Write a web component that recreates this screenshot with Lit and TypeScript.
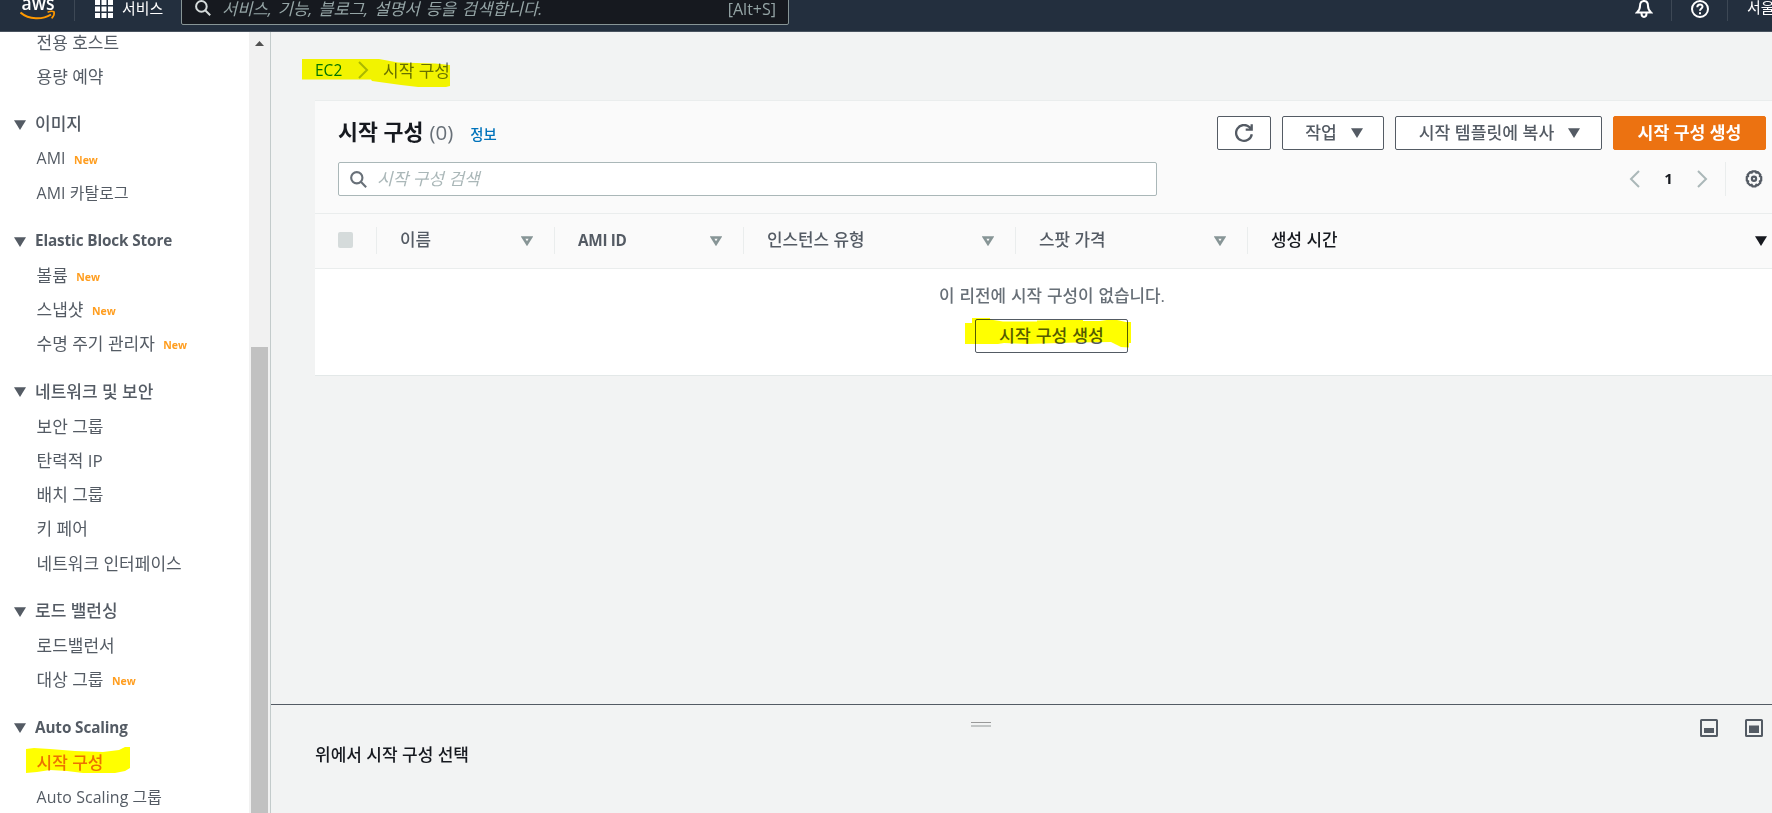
import { LitElement, html, css, svg, nothing } from "lit";
import { customElement, property } from "lit/decorators.js";

type NavItem = { label: string; isNew?: boolean; active?: boolean };
type NavGroup = { title?: string; latin?: boolean; items: NavItem[] };
type Column = { label: string; width: number; sorted?: boolean; latin?: boolean };

const NAV: NavGroup[] = [
  { items: [{ label: "전용 호스트" }, { label: "용량 예약" }] },
  { title: "이미지", items: [{ label: "AMI", isNew: true }, { label: "AMI 카탈로그" }] },
  {
    title: "Elastic Block Store",
    latin: true,
    items: [
      { label: "볼륨", isNew: true },
      { label: "스냅샷", isNew: true },
      { label: "수명 주기 관리자", isNew: true },
    ],
  },
  {
    title: "네트워크 및 보안",
    items: [
      { label: "보안 그룹" },
      { label: "탄력적 IP" },
      { label: "배치 그룹" },
      { label: "키 페어" },
      { label: "네트워크 인터페이스" },
    ],
  },
  { title: "로드 밸런싱", items: [{ label: "로드밸런서" }, { label: "대상 그룹", isNew: true }] },
  { title: "Auto Scaling", latin: true, items: [{ label: "시작 구성", active: true }, { label: "Auto Scaling 그룹" }] },
];

const COLUMNS: Column[] = [
  { label: "이름", width: 178 },
  { label: "AMI ID", width: 189, latin: true },
  { label: "인스턴스 유형", width: 272 },
  { label: "스팟 가격", width: 232 },
  { label: "생성 시간", width: 525, sorted: true },
];

const magnifier = (size: number) => html`<svg width=${size} height=${size} viewBox="0 0 16 16" fill="none" stroke="currentColor" stroke-width="2">
  <circle cx="6.4" cy="6.4" r="5.3" /><path d="M10.2 10.2 15.2 15.2" />
</svg>`;

const caret = html`<svg width="12" height="10" viewBox="0 0 12 10"><path d="M0 .2h12L6 10Z" fill="currentColor" /></svg>`;
const hollowCaret = html`<svg width="12" height="10" viewBox="0 0 12 10"><path d="M2 1.500h8L6 7.800Z" fill="none" stroke="currentColor" stroke-width="2.600" /></svg>`;

const chevron = (d: string) => html`<svg width="11" height="18" viewBox="0 0 11 18" fill="none" stroke="currentColor" stroke-width="2"><path d=${d} /></svg>`;
const LEFT = "M10 1 2 9l8 8";
const RIGHT = "M1 1l8 8-8 8";

const base = css`
  :host { display: block; }
  * { box-sizing: border-box; }
  svg { display: block; flex: none; }
`;

@customElement("top-bar")
export class TopBar extends LitElement {
  static styles = [base, css`
    :host { flex: none; }
    .bar { height: 48px; margin-top: -16px; background: #232f3e; border-bottom: 1px solid #49535f; display: flex; align-items: center; color: #fff; }
    .brand { width: 75px; padding-left: 20px; border-right: 1px solid #3d4855; height: 26px; }
    .services { display: flex; align-items: center; gap: 9px; padding-left: 20px; width: 106px; white-space: nowrap; font-size: 14.900px; }
    .services svg { margin-top: 3px; }
    .services span { padding-bottom: 1px; }
    .search { width: 608px; height: 34px; border: 1px solid #879596; border-radius: 2px; background: #16191f; display: flex; align-items: center; padding: 0 12px 0 13px; color: #d5dbdb; }
    .hint { flex: 1; margin-left: 11px; font-style: italic; font-size: 16.600px; color: #95a5a6; white-space: nowrap; word-spacing: 1.500px; }
    .key { font-size: 16px; color: #95a5a6; padding-top: 3px; }
    .tools { margin-left: auto; display: flex; align-items: center; height: 26px; }
    .tool { height: 26px; display: flex; align-items: center; justify-content: center; width: 56px; border-right: 1px solid #3d4855; }
    .tool svg { margin-top: 3px; }
    .region { width: 44px; padding: 0 0 2px 19px; overflow: hidden; white-space: nowrap; font-size: 15px; }
  `];
  render() {
    return html`<header class="bar">
      <div class="brand">
        <svg width="36" height="26" viewBox="0 0 36 26">
          <text x="18" y="14.500" text-anchor="middle" textLength="33" lengthAdjust="spacingAndGlyphs" font-family="Open Sans, sans-serif" font-weight="600" font-size="19" fill="#fff">aws</text>
          <path d="M.5 17.500C9 24.800 22.500 24.800 31 19.500" fill="none" stroke="#ff9900" stroke-width="2" />
          <path d="M27.600 17.300c2.500-1.100 5-1.300 6.500-.4.4 2-.5 4.600-2.500 6.500" fill="none" stroke="#ff9900" stroke-width="1.600" />
        </svg>
      </div>
      <div class="services">
        <svg width="18" height="18" viewBox="0 0 18 18" fill="#fff">
          ${[0, 6.5, 13].map((y) => [0, 6.5, 13].map((x) => svg`<rect x=${x} y=${y} width="5" height="5" />`))}
        </svg>
        <span>서비스</span>
      </div>
      <div class="search">${magnifier(16)}<span class="hint">서비스, 기능, 블로그, 설명서 등을 검색합니다.</span><span class="key">[Alt+S]</span></div>
      <div class="tools">
        <div class="tool">
          <svg width="18" height="20" viewBox="0 0 18 20" fill="none" stroke="#fff" stroke-width="2">
            <path d="M9 2C5.800 2 5 4.500 5 7c0 3.200-1.200 4.800-3 6.500h14C14.200 11.800 13 10.200 13 7c0-2.500-.8-5-4-5ZM9 0v2M6.500 14.500c0 4.500 5 4.500 5 0" />
          </svg>
        </div>
        <div class="tool">
          <svg width="18" height="20" viewBox="0 0 18 20" fill="none" stroke="#fff" stroke-width="2">
            <circle cx="9" cy="10" r="8" /><path d="M6.300 8.200c.1-3.700 5.400-3.400 5.200-.4-.1 1.700-2.400 1.700-2.500 3.900M9 13.200v2" />
          </svg>
        </div>
        <div class="region">서울</div>
      </div>
    </header>`;
  }
}

@customElement("side-nav")
export class SideNav extends LitElement {
  static styles = [base, css`
    :host { flex: none; width: 271px; height: 100%; }
    .wrap { display: flex; height: 100%; border-right: 1px solid #c3cbcb; background: #fff; overflow: hidden; }
    nav { flex: 1; min-width: 0; color: #545b64; font-size: 17px; }
    .group:first-child { margin-top: -8px; }
    .title { margin-top: 13.500px; height: 35px; display: flex; align-items: center; gap: 9px; padding-left: 14px; font-weight: 500; font-size: 17px; white-space: nowrap; }
    .title.latin { font-weight: 700; font-size: 15.300px; letter-spacing: -.12px; }
    .title svg { margin-top: 3px; }
    .title span { padding-bottom: 1px; }
    .title.latin span { padding: 0; }
    .item { height: 34.150px; padding-left: 36.500px; display: flex; align-items: center; gap: 9px; white-space: nowrap; position: relative; }
    .latin-label { font-size: 15.900px; letter-spacing: .1px; padding-top: 1px; }
    .new { margin-left: -.5px; color: #ff9d1e; font-size: 10.500px; font-weight: 700; padding-top: 5px; }
    .active .label { color: #ec7211; font-weight: 500; }
    .mark { position: absolute; left: 26px; top: 3px; mix-blend-mode: multiply; }
    .track { width: 21px; background: #f1f1f1; display: flex; flex-direction: column; align-items: center; padding: 9px 1px 0 0; }
    .thumb { width: 17px; flex: 1; background: #c1c1c1; margin-top: 301px; }
  `];
  render() {
    return html`<div class="wrap">
      <nav>
        ${NAV.map((g) => html`<div class="group">
          ${g.title ? html`<div class="title ${g.latin ? "latin" : ""}">${caret}<span>${g.title}</span></div>` : nothing}
          ${g.items.map((i) => html`<div class="item ${i.active ? "active" : ""}">
            <span class="label ${/^A/.test(i.label) ? "latin-label" : ""}">${i.label}</span>
            ${i.isNew ? html`<span class="new">New</span>` : nothing}
            ${i.active ? html`<svg class="mark" width="104" height="27" viewBox="26 748 104 27"><path fill="#ff0" d="M26 750l8-1 16 1 25 2 28 1 16-2 6-3h5v21l-5 3-10 2H83l-16-2-17-1-13 2-11 1Z" /></svg>` : nothing}
          </div>`)}
        </div>`)}
      </nav>
      <div class="track">
        <svg width="9" height="5" viewBox="0 0 9 5"><path d="M4.500 0 9 5H0Z" fill="#505050" /></svg>
        <div class="thumb"></div>
      </div>
    </div>`;
  }
}

@customElement("config-table")
export class ConfigTable extends LitElement {
  @property({ type: Number }) count = 0;
  static styles = [base, css`
    .card { background: #fff; border-top: 1px solid #eaeded; border-bottom: 1px solid #e3e8e8; height: 276px; width: 1457px; overflow: hidden; }
    .head { background: #fafafa; height: 113px; border-bottom: 1px solid #eaeded; padding: 15px 6px 0 23px; display: flex; flex-direction: column; gap: 12px; }
    .row { display: flex; align-items: center; height: 34px; }
    h1 { margin: 0; font-size: 21.700px; font-weight: 700; color: #16191f; white-space: nowrap; padding-bottom: 5px; }
    .count { margin-left: 6px; font-size: 20.500px; color: #687078; padding-bottom: 2px; }
    .info { margin: 1px 0 0 17px; color: #0073bb; font-size: 14.400px; font-weight: 500; }
    .actions { margin-left: auto; display: flex; gap: 11px; }
    .btn { height: 34px; border: 1px solid #545b64; border-radius: 2px; background: #fff; color: #545b64; font-weight: 500; font-size: 17.200px; display: flex; align-items: center; justify-content: center; gap: 14px; white-space: nowrap; padding-bottom: 4px; }
    .btn svg { margin-top: 4px; }
    .w54 { width: 54px; } .w102 { width: 102px; padding-left: 2px; } .w207 { width: 207px; padding-left: 2px; } .w153 { width: 153px; }
    .primary { background: #ec7211; border-color: #ec7211; color: #fff; font-weight: 700; }
    .find { width: 819px; height: 34px; border: 1px solid #aab7b8; border-radius: 2px; background: #fff; display: flex; align-items: center; padding-left: 11px; gap: 10px; color: #687078; font-size: 17px; }
    .find span { color: #aab7b8; font-style: italic; padding-bottom: 3px; }
    .pager { margin-left: auto; display: flex; align-items: center; height: 34px; color: #aab7b8; }
    .pager b { font-size: 15px; font-weight: 700; color: #16191f; width: 57px; text-align: center; padding-bottom: 3px; }
    .gear { margin-left: 17px; border-left: 1px solid #eaeded; height: 34px; display: flex; align-items: center; padding: 0 3px 0 19px; color: #545b64; }
    .cols { display: flex; align-items: center; height: 55px; background: #fafafa; border-bottom: 1px solid #eaeded; padding: 0 0 2px 23px; }
    .check { flex: none; width: 15px; height: 16px; border-radius: 2px; background: #d5dbdb; margin-right: 23px; }
    .col { height: 27px; flex: none; border-left: 1px solid #eaeded; padding: 0 21px 0 23px; display: flex; align-items: center; justify-content: space-between; color: #545b64; font-weight: 500; font-size: 16.900px; white-space: nowrap; }
    .col span { padding-bottom: 4px; }
    .col .en { font-weight: 700; font-size: 15.300px; padding: 0; letter-spacing: -.3px; }
    .col svg { color: #879596; margin-top: 2px; }
    .col:last-child { padding-right: 5.500px; }
    .sorted, .sorted svg { color: #16191f; }
    .empty { width: 1474px; padding: 13px 0 0; display: flex; flex-direction: column; align-items: center; gap: 10px; color: #687078; font-weight: 500; font-size: 16.900px; white-space: nowrap; word-spacing: .5px; }
    .empty p { margin: 0; height: 27px; line-height: 27px; }
    .holder { position: relative; left: -.5px; }
    .holder svg { position: absolute; left: -10px; top: -1px; mix-blend-mode: multiply; }
  `];
  render() {
    return html`<section class="card">
      <div class="head">
        <div class="row">
          <h1>시작 구성</h1><span class="count">(${this.count})</span><span class="info">정보</span>
          <div class="actions">
            <div class="btn w54"><svg width="18" height="18" viewBox="0 0 18 18" fill="none" stroke="currentColor" stroke-width="2.300"><path d="M16.800 10.200A7.900 7.900 0 1 1 14.600 3.300L16.500 5.200M16.700.2v5.500h-6" /></svg></div>
            <div class="btn w102"><span>작업</span>${caret}</div>
            <div class="btn w207"><span>시작 템플릿에 복사</span>${caret}</div>
            <div class="btn primary w153">시작 구성 생성</div>
          </div>
        </div>
        <div class="row">
          <div class="find">${magnifier(17)}<span>시작 구성 검색</span></div>
          <div class="pager">
            ${chevron(LEFT)}<b>1</b>${chevron(RIGHT)}
            <div class="gear">
              <svg width="18" height="18" viewBox="0 0 18 18" fill="none" stroke="currentColor">
                <path stroke-width="2.200" stroke-linejoin="round" d="M7.300 1.300h3.400l.6 1.400 1.500-.6 2.600 2.600-.6 1.500 1.400.6v3.900l-1.400.6.6 1.500-2.600 2.500-1.500-.6-.6 1.600H7.300l-.6-1.600-1.500.6-2.600-2.500.6-1.500-1.400-.6V6.800l1.400-.6-.6-1.500 2.600-2.600 1.500.6Z" />
                <circle cx="9" cy="8.800" r="2.100" stroke-width="2.200" />
              </svg>
            </div>
          </div>
        </div>
      </div>
      <div class="cols">
        <div class="check"></div>
        ${COLUMNS.map((c) => html`<div class="col ${c.sorted ? "sorted" : ""}" style="width:${c.width}px"><span class=${c.latin ? "en" : ""}>${c.label}</span>${c.sorted ? caret : hollowCaret}</div>`)}
      </div>
      <div class="empty">
        <p>이 리전에 시작 구성이 없습니다.</p>
        <div class="holder">
          <div class="btn w153">시작 구성 생성</div>
          <svg width="166" height="31" viewBox="965 318 166 31"><path fill="#ff0" d="M965 323h7v-5h18v1.500l13 2h34v-1l17-.5h29v1h17l7-1h10l9 2h5v21h-2v4.500l-8-.5-5-2.500-5-2.500-34 .5-50 1.500-23-1-6 1h-33Z" /></svg>
        </div>
      </div>
    </section>`;
  }
}

@customElement("split-panel")
export class SplitPanel extends LitElement {
  static styles = [base, css`
    .panel { border-top: 1px solid #545b64; height: 109px; padding: 14px 9px 0 44px; }
    .tools { display: flex; align-items: flex-start; color: #545b64; }
    .grip { margin: 3px auto 0 656px; width: 20px; height: 5px; border-top: 1px solid #999; border-bottom: 2px solid #c2c5c5; }
    .tools svg + svg { margin-left: 27px; }
    .text { margin-top: 5px; color: #16191f; font-size: 17px; font-weight: 500; line-height: 26px; }
  `];
  render() {
    const box = (y: number) => html`<svg width="18" height="18" viewBox="0 0 18 18"><rect x="1" y="1" width="16" height="16" rx=".6" fill="none" stroke="currentColor" stroke-width="2" /><rect x="4" y=${y} width="10" height=${14 - y} fill="currentColor" /></svg>`;
    return html`<section class="panel">
      <div class="tools"><div class="grip"></div>${box(9)}${box(6.5)}</div>
      <div class="text">위에서 시작 구성 선택</div>
    </section>`;
  }
}

@customElement("app-root")
export class AppRoot extends LitElement {
  static styles = [base, css`
    :host { height: 813px; width: 1772px; overflow: hidden; font-family: "Open Sans", "Noto Sans CJK KR", sans-serif; background: #f2f3f3; }
    .page { display: flex; flex-direction: column; height: 813px; }
    .body { display: flex; flex: 1; min-height: 0; }
    main { flex: 1; min-width: 0; background: #f2f3f3; display: flex; flex-direction: column; }
    .content { flex: 1; padding-left: 44px; }
    .crumbs { position: relative; height: 68px; padding-top: 8px; display: flex; align-items: center; color: #687078; font-size: 17px; white-space: nowrap; }
    .home { color: #0073bb; font-size: 15.500px; width: 43px; }
    .here { margin-left: 14px; padding-bottom: 2px; }
    .sep { color: #aab7b8; display: flex; }
    .mark { position: absolute; left: -13px; top: 27px; mix-blend-mode: multiply; }
  `];
  render() {
    return html`<div class="page">
      <top-bar></top-bar>
      <div class="body">
        <side-nav></side-nav>
        <main>
          <div class="content">
            <div class="crumbs">
              <span class="home">EC2</span><span class="sep">${chevron(RIGHT)}</span><span class="here">시작 구성</span>
              <svg class="mark" width="148" height="28" viewBox="302 59 148 28"><path fill="#ff0" d="M302 59h77l19 3.500 37 1 15 1.500v21l-4 1h-28l-17-2-29-4-1-1.500h-69Z" /></svg>
            </div>
            <config-table .count=${0}></config-table>
          </div>
          <split-panel></split-panel>
        </main>
      </div>
    </div>`;
  }
}
